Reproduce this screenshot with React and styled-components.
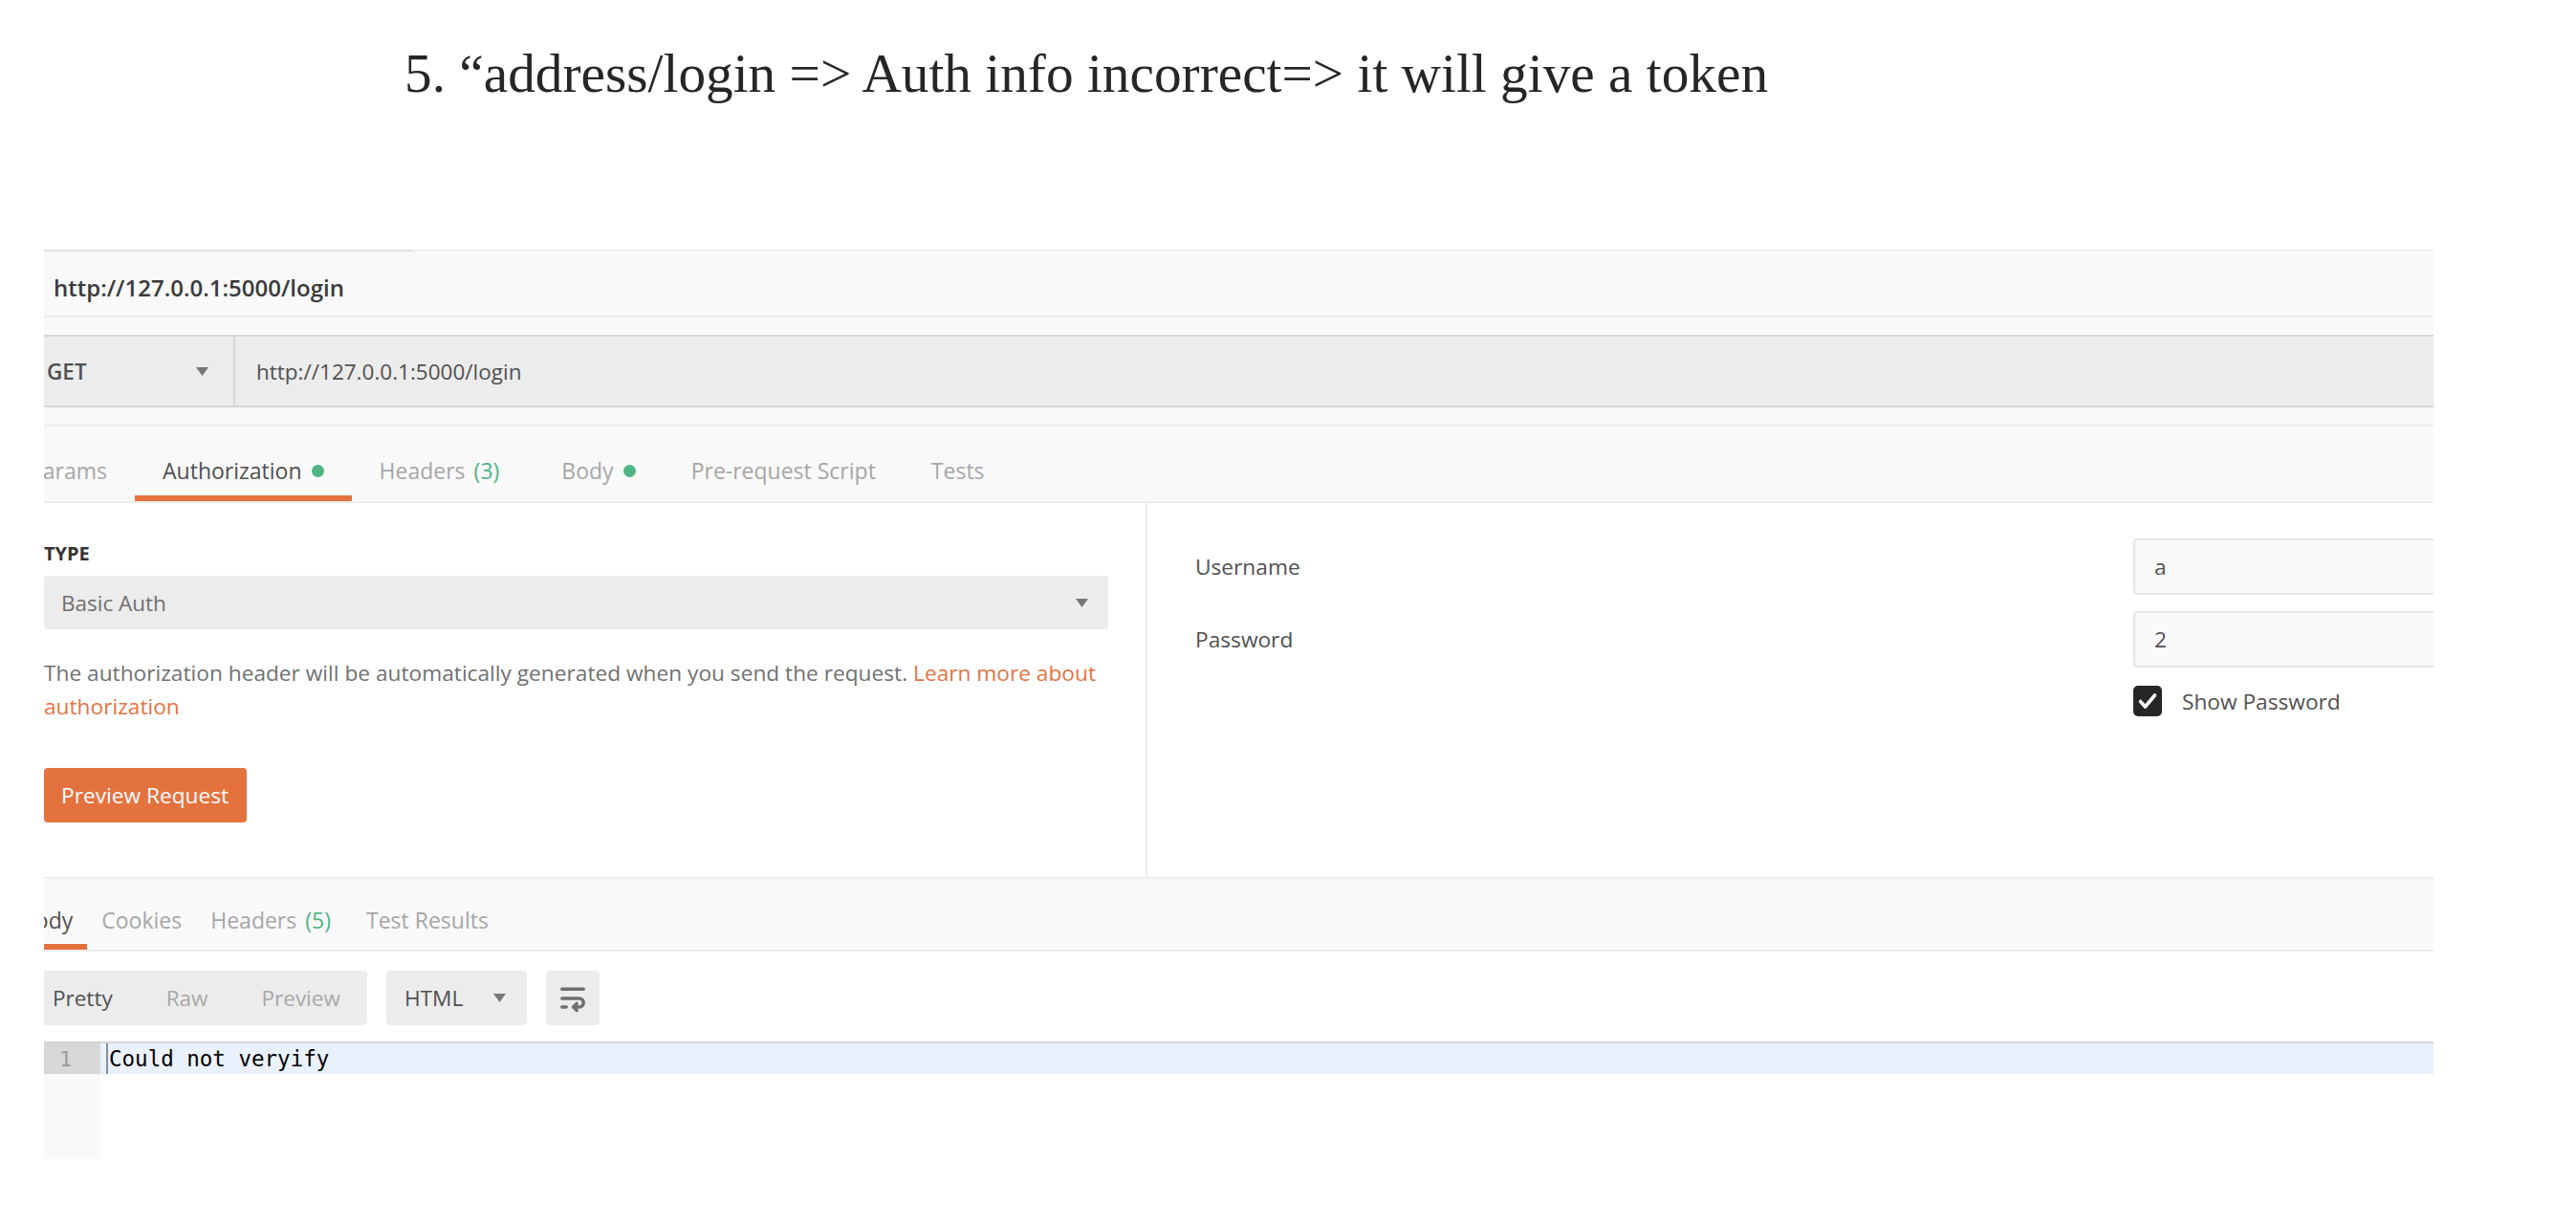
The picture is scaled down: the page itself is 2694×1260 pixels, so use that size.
import React from "react";
import styled, { createGlobalStyle } from "styled-components";

const GlobalStyle = createGlobalStyle`
  html, body {
    margin: 0;
    padding: 0;
    background: #ffffff;
  }
  body {
    font-family: "Open Sans", "Liberation Sans", sans-serif;
  }
  * { box-sizing: border-box; }
`;

const ORANGE = "#e4723f";
const GREEN = "#4eb585";

export default function App() {
  const authTabs = [
    { label: "Params" },
    { label: "Authorization", active: true, dot: true },
    { label: "Headers", count: 3 },
    { label: "Body", dot: true },
    { label: "Pre-request Script" },
    { label: "Tests" },
  ];

  const responseTabs = [
    { label: "Body", active: true },
    { label: "Cookies" },
    { label: "Headers", count: 5 },
    { label: "Test Results" },
  ];

  return (
    <Page>
      <GlobalStyle />
      <Title>5. “address/login =&gt; Auth info incorrect=&gt; it will give a token</Title>

      <Panel>
        <TabStrip>
          <RequestTab>http://127.0.0.1:5000/login</RequestTab>
        </TabStrip>
        <GapStrip />

        <RequestBar>
          <MethodSelect>
            <span>GET</span>
            <Caret />
          </MethodSelect>
          <UrlField>http://127.0.0.1:5000/login</UrlField>
        </RequestBar>
        <GapStrip $bordered />

        <TabRow>
          <TabList $shift={-44}>
            {authTabs.map((t) => (
              <Tab key={t.label} $active={t.active} $pad={29} $wide={t.count !== undefined}>
                {t.label}
                {t.count !== undefined && <Count>({t.count})</Count>}
                {t.dot && <Dot />}
              </Tab>
            ))}
          </TabList>
        </TabRow>

        <AuthBody>
          <LeftCol>
            <TypeLabel>TYPE</TypeLabel>
            <SelectBox>
              <span>Basic Auth</span>
              <Caret />
            </SelectBox>
            <Description>
              The authorization header will be automatically generated when you send the request.{" "}
              <Link>
                Learn more about
                <br />
                authorization
              </Link>
            </Description>
            <PrimaryButton>Preview Request</PrimaryButton>
          </LeftCol>

          <RightCol>
            <FieldGrid>
              <FieldLabel>Username</FieldLabel>
              <TextInput>a</TextInput>
              <FieldLabel>Password</FieldLabel>
              <TextInput>2</TextInput>
              <CheckRow>
                <CheckBox>
                  <svg width="30" height="32" viewBox="0 0 30 32">
                    <path d="M7.5 16.5l5 5.5 10-12" fill="none" stroke="#fff" strokeWidth="3.6" strokeLinecap="round" strokeLinejoin="round" />
                  </svg>
                </CheckBox>
                <CheckLabel>Show Password</CheckLabel>
              </CheckRow>
            </FieldGrid>
          </RightCol>
        </AuthBody>

        <ResponseRow>
          <TabList $shift={-39}>
            {responseTabs.map((t) => (
              <Tab key={t.label} $active={t.active} $pad={15} $top={18} $wide={t.count !== undefined}>
                {t.label}
                {t.count !== undefined && <Count>({t.count})</Count>}
              </Tab>
            ))}
          </TabList>
        </ResponseRow>

        <Toolbar>
          <Segmented>
            <SegItem $active>Pretty</SegItem>
            <SegItem>Raw</SegItem>
            <SegItem>Preview</SegItem>
          </Segmented>
          <FormatSelect>
            <span>HTML</span>
            <Caret />
          </FormatSelect>
          <IconButton>
            <svg width="36" height="36" viewBox="0 0 24 24" fill="none" stroke="#6f6f6f" strokeWidth="2.3" strokeLinecap="round" strokeLinejoin="round">
              <path d="M4.5 5.5h15" />
              <path d="M4.5 12h12a3 3 0 0 1 0 6H12.5" />
              <path d="M14.8 15.6l-2.4 2.4 2.4 2.4" />
              <path d="M4.5 18h3" />
            </svg>
          </IconButton>
        </Toolbar>

        <CodeArea>
          <CodeLine>
            <GutterCell>
              <FoldMark>⁝</FoldMark>
              <LineNo>1</LineNo>
            </GutterCell>
            <LineText>Could not veryify</LineText>
          </CodeLine>
          <CodeFiller>
            <GutterCell $blank />
          </CodeFiller>
        </CodeArea>
      </Panel>
    </Page>
  );
}

function Caret() {
  return (
    <svg width="13" height="9" viewBox="0 0 13 9">
      <polygon points="0,0 13,0 6.5,9" fill="#777" />
    </svg>
  );
}

const Page = styled.div`
  width: 2694px;
  height: 1260px;
  overflow: hidden;
  background: #fff;
`;

const Title = styled.h1`
  margin: 0 0 150px;
  padding: 43px 0 0 423px;
  font-family: "Liberation Serif", "DejaVu Serif", serif;
  font-weight: 400;
  font-size: 57.3px;
  line-height: 68px;
  color: #262626;
  white-space: nowrap;
`;

const Panel = styled.div`
  margin-left: 46px;
  width: 2499px;
  overflow: hidden;
`;

const TabStrip = styled.div`
  display: flex;
  height: 71px;
  background: #f9f9f9;
  border-top: 2px solid #efefef;
  border-bottom: 2px solid #ececec;
`;

const RequestTab = styled.div`
  width: 386px;
  margin-top: -2px;
  border-top: 2px solid #e0e0e0;
  display: flex;
  align-items: center;
  padding: 8px 0 0 10px;
  font-size: 24px;
  font-weight: 600;
  color: #3a3a3a;
`;

const GapStrip = styled.div`
  height: ${(p) => (p.$bordered ? "20px" : "18px")};
  background: #f9f9f9;
  border-bottom: ${(p) => (p.$bordered ? "2px solid #ececec" : "none")};
`;

const RequestBar = styled.div`
  display: flex;
  height: 76px;
  background: #ececec;
  border-top: 2px solid #d6d6d6;
  border-bottom: 2px solid #d6d6d6;
`;

const MethodSelect = styled.div`
  width: 200px;
  display: flex;
  align-items: center;
  justify-content: space-between;
  padding: 0 26px 0 3px;
  border-right: 2px solid #d6d6d6;
  font-size: 22.5px;
  font-weight: 600;
  color: #505050;
`;

const UrlField = styled.div`
  display: flex;
  align-items: center;
  padding-left: 22px;
  font-size: 22.5px;
  color: #505050;
`;

const TabRow = styled.div`
  height: 80px;
  background: #f9f9f9;
  border-bottom: 2px solid #ececec;
`;

const ResponseRow = styled(TabRow)`
  height: 76px;
`;

const TabList = styled.div`
  display: flex;
  height: 100%;
  margin-left: ${(p) => p.$shift}px;
`;

const Tab = styled.div`
  display: flex;
  align-items: center;
  padding: ${(p) => p.$top ?? 20}px ${(p) => (p.$wide ? p.$pad + 7 : p.$pad)}px 0 ${(p) => p.$pad}px;
  border-bottom: 6px solid ${(p) => (p.$active ? ORANGE : "transparent")};
  font-size: 23px;
  color: ${(p) => (p.$active ? "#505050" : "#a6a6a6")};
  white-space: nowrap;
`;

const Count = styled.span`
  margin-left: 9px;
  color: ${GREEN};
`;

const Dot = styled.span`
  width: 13px;
  height: 13px;
  margin-left: 10px;
  border-radius: 50%;
  background: ${GREEN};
`;

const AuthBody = styled.div`
  display: grid;
  grid-template-columns: 1154px 1fr;
  height: 393px;
  border-bottom: 2px solid #ececec;
`;

const LeftCol = styled.div`
  padding: 39px 39px 0 0;
  border-right: 2px solid #ececec;
`;

const TypeLabel = styled.div`
  font-size: 20px;
  font-weight: 700;
  line-height: 27px;
  color: #333;
`;

const SelectBox = styled.div`
  margin-top: 10px;
  height: 56px;
  display: flex;
  align-items: center;
  justify-content: space-between;
  padding: 0 21px 0 18px;
  background: #ececec;
  border-radius: 4px;
  font-size: 22.5px;
  color: #707070;
`;

const Description = styled.p`
  margin: 28px 0 0;
  font-size: 22.7px;
  line-height: 35px;
  color: #707070;
  white-space: nowrap;
`;

const Link = styled.span`
  color: ${ORANGE};
`;

const PrimaryButton = styled.div`
  display: inline-flex;
  align-items: center;
  margin-top: 47px;
  height: 57px;
  padding: 0 19px 0 18px;
  background: ${ORANGE};
  border-radius: 4px;
  font-size: 22.7px;
  color: #fff;
`;

const RightCol = styled.div`
  padding: 37px 0 0 50px;
`;

const FieldGrid = styled.div`
  display: grid;
  grid-template-columns: 981px 420px;
  row-gap: 17px;
  align-items: center;
`;

const FieldLabel = styled.div`
  font-size: 22.7px;
  color: #505050;
`;

const TextInput = styled.div`
  height: 59px;
  display: flex;
  align-items: center;
  padding-left: 20px;
  background: #fafafa;
  border: 2px solid #e6e6e6;
  border-radius: 4px;
  font-size: 22.7px;
  color: #505050;
`;

const CheckRow = styled.div`
  grid-column: 2;
  display: flex;
  align-items: center;
  margin-top: 2px;
`;

const CheckBox = styled.div`
  width: 30px;
  height: 32px;
  border-radius: 5px;
  background: #262626;
  display: flex;
`;

const CheckLabel = styled.span`
  margin-left: 21px;
  font-size: 22.7px;
  color: #505050;
`;

const Toolbar = styled.div`
  display: flex;
  gap: 20px;
  padding: 20px 0 17px;
  margin-left: -19px;
`;

const Segmented = styled.div`
  display: flex;
  height: 57px;
  background: #ececec;
  border-radius: 4px;
`;

const SegItem = styled.div`
  display: flex;
  align-items: center;
  padding: 0 28px;
  font-size: 22.5px;
  color: ${(p) => (p.$active ? "#505050" : "#a8a8a8")};
`;

const FormatSelect = styled.div`
  width: 147px;
  height: 57px;
  display: flex;
  align-items: center;
  justify-content: space-between;
  padding: 0 22px 0 19px;
  background: #ececec;
  border-radius: 4px;
  font-size: 22.7px;
  color: #505050;
`;

const IconButton = styled.div`
  width: 56px;
  height: 57px;
  display: flex;
  align-items: center;
  justify-content: center;
  background: #ececec;
  border-radius: 4px;
`;

const CodeArea = styled.div`
  border-top: 2px solid #d4d4d4;
`;

const CodeLine = styled.div`
  display: flex;
  height: 32px;
  background: #e9f1fc;
`;

const CodeFiller = styled.div`
  display: flex;
  height: 89px;
`;

const GutterCell = styled.div`
  width: 59px;
  flex-shrink: 0;
  display: flex;
  align-items: center;
  background: ${(p) => (p.$blank ? "#f9f9f9" : "#d8d8d8")};
  font-family: "DejaVu Sans Mono", monospace;
  font-size: 22px;
  color: #9a9a9a;
`;

const FoldMark = styled.span`
  margin-left: -6px;
  width: 14px;
  overflow: hidden;
`;

const LineNo = styled.span`
  margin-left: 8px;
`;

const LineText = styled.div`
  display: flex;
  align-items: center;
  margin-left: 6px;
  padding-left: 1px;
  border-left: 2px solid #8391a8;
  font-family: "DejaVu Sans Mono", monospace;
  font-size: 22.5px;
  color: #000;
`;
